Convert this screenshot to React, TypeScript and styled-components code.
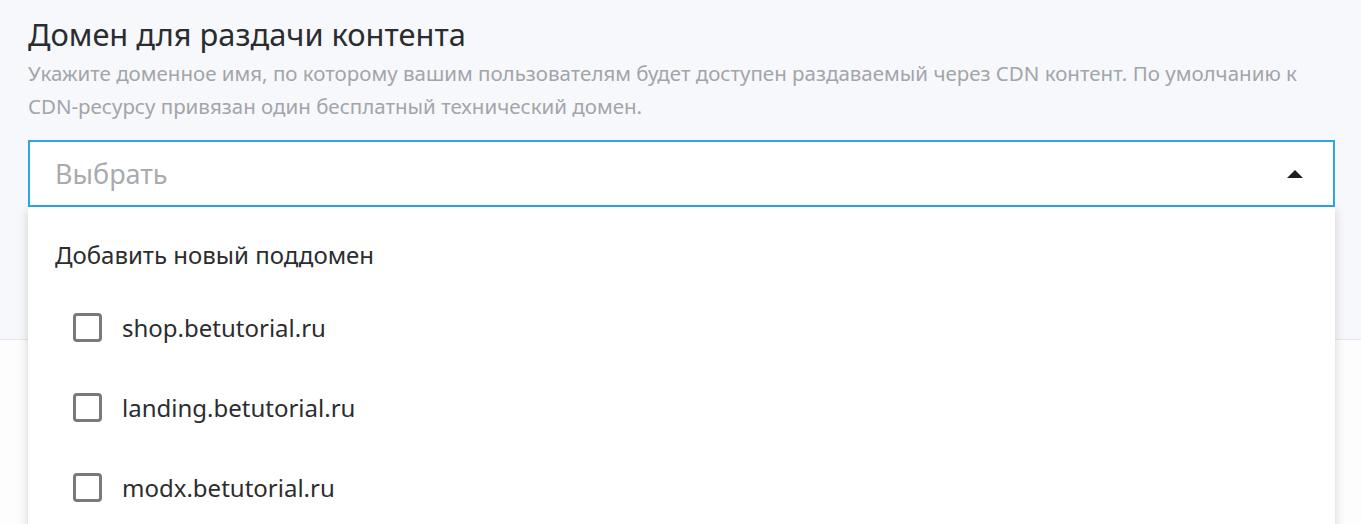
import React, { useState } from 'react'
import styled, { createGlobalStyle } from 'styled-components'

const GlobalStyle = createGlobalStyle`
  body {
    margin: 0;
    background: #ffffff;
    font-family: "Noto Sans", "Open Sans", sans-serif;
  }
`

const Page = styled.div`
  display: flex;
  flex-direction: column;
  height: 100vh;
  overflow: hidden;
`

const Section = styled.section`
  position: relative;
  z-index: 1;
  flex: 0 0 340px;
  background: #f7f8fb;
  border-bottom: 1px solid #e4e7ec;
  box-sizing: border-box;
  padding: 15px 26px 0 28px;
`

const Rest = styled.div`
  flex: 1;
  background: #fdfdfe;
`

const Title = styled.h2`
  margin: 0;
  font-size: 30.8px;
  line-height: 38px;
  font-weight: 400;
  color: #2a2c2f;
`

const Hint = styled.p`
  margin: 4px 0 0;
  font-size: 20.5px;
  line-height: 33px;
  color: #a2a5aa;
  white-space: nowrap;
`

const Field = styled.div`
  position: relative;
  margin-top: 17px;
`

const SelectBox = styled.div<{ $open: boolean }>`
  display: flex;
  align-items: center;
  justify-content: space-between;
  height: 67px;
  box-sizing: border-box;
  padding: 0 30px 0 25px;
  background: #fff;
  border: 2px solid ${p => (p.$open ? '#2aa8df' : '#cfe0ee')};
  cursor: pointer;
`

const Placeholder = styled.span`
  font-size: 27px;
  color: #a9abad;
`

const Caret = styled.span<{ $open: boolean }>`
  width: 0;
  height: 0;
  border-left: 8px solid transparent;
  border-right: 8px solid transparent;
  ${p => (p.$open ? 'border-bottom: 8px solid #1d1f21;' : 'border-top: 8px solid #1d1f21;')}
`

const NextBox = styled.div`
  margin-top: 24px;
  height: 75px;
  box-sizing: border-box;
  background: #fff;
  border: 2px solid #cfe0ee;
`

const Menu = styled.div`
  position: absolute;
  top: 67px;
  left: 0;
  right: 0;
  height: 360px;
  background: #fff;
  box-shadow: 0 3px 10px rgba(0, 0, 0, 0.16);
  padding-top: 32px;
  box-sizing: border-box;
  z-index: 2;
`

const MenuHeader = styled.div`
  padding-left: 27px;
  font-size: 24px;
  line-height: 32px;
  color: #2b2d2f;
  margin-bottom: 16px;
`

const Option = styled.label`
  display: flex;
  align-items: center;
  height: 80px;
  padding-left: 45px;
  font-size: 24px;
  color: #2b2d2f;
  cursor: pointer;
`

const Box = styled.span<{ $checked: boolean }>`
  width: 29px;
  height: 29px;
  box-sizing: border-box;
  border: 3px solid #7a7a7a;
  border-radius: 4px;
  margin-right: 20px;
  background: ${p => (p.$checked ? '#7a7a7a' : '#fff')};
`

const domains = ['shop.betutorial.ru', 'landing.betutorial.ru', 'modx.betutorial.ru']

const App = (): JSX.Element => {
  const [isOpen, setIsOpen] = useState(true)
  const [checked, setChecked] = useState<string[]>([])

  const toggle = (d: string): void => {
    setChecked(checked.includes(d) ? checked.filter(c => c !== d) : [...checked, d])
  }

  return (
    <Page>
      <GlobalStyle />
      <Section>
        <Title>Домен для раздачи контента</Title>
        <Hint>
          Укажите доменное имя, по которому вашим пользователям будет доступен раздаваемый через CDN контент. По умолчанию к
          <br />
          CDN-ресурсу привязан один бесплатный технический домен.
        </Hint>
        <Field>
          <SelectBox $open={isOpen} onClick={() => { setIsOpen(!isOpen) }}>
            <Placeholder>Выбрать</Placeholder>
            <Caret $open={isOpen} />
          </SelectBox>
          {isOpen && (
            <Menu>
              <MenuHeader>Добавить новый поддомен</MenuHeader>
              {domains.map(d => (
                <Option key={d} onClick={() => { toggle(d) }}>
                  <Box $checked={checked.includes(d)} />
                  {d}
                </Option>
              ))}
            </Menu>
          )}
          <NextBox />
        </Field>
      </Section>
      <Rest />
    </Page>
  )
}

export default App
